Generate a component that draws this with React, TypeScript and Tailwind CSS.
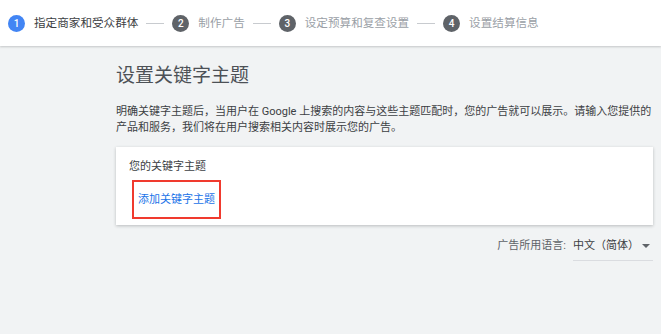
const steps = [
  { n: 1, label: '指定商家和受众群体', active: true },
  { n: 2, label: '制作广告', active: false },
  { n: 3, label: '设定预算和复查设置', active: false },
  { n: 4, label: '设置结算信息', active: false },
];

function Stepper() {
  return (
    <div className="h-[46px] bg-white shadow-[0_1px_2px_rgba(60,64,67,0.25)] flex items-center pl-[8px] relative z-10">
      {steps.map((s, i) => (
        <div key={s.n} className="flex items-center">
          {i > 0 && <div className="w-[18px] h-px bg-[#c8cbcf] mx-[8px]" />}
          <div
            className={`w-[17px] h-[17px] rounded-full flex items-center justify-center text-white text-[10px] font-medium ${
              s.active ? 'bg-[#4285f4]' : 'bg-[#5f6368]'
            }`}
          >
            {s.n}
          </div>
          <span
            className={`ml-[9px] text-[11.6px] leading-[16px] ${
              s.active ? 'text-[#3c4043]' : 'text-[#9aa0a6]'
            }`}
          >
            {s.label}
          </span>
        </div>
      ))}
    </div>
  );
}

export default function App() {
  return (
    <div className="w-full h-[334px] bg-[#f1f3f4] font-['Roboto','Noto_Sans_CJK_SC',sans-serif] overflow-hidden">
      <Stepper />

      <div className="pl-[116px] pr-[8px] pt-[18px]">
        {/* Title */}
        <h1 className="text-[19px] leading-[23px] text-[#4d5156]">设置关键字主题</h1>

        {/* Description */}
        <p className="mt-[17px] text-[11px] leading-[16px] text-[#3c4043] w-[537px]">
          明确关键字主题后，当用户在 Google 上搜索的内容与这些主题匹配时，您的广告就可以展示。请输入您提供的
          <br />
          产品和服务，我们将在用户搜索相关内容时展示您的广告。
        </p>

        {/* Keyword card */}
        <div className="mt-[11px] w-[537px] bg-white shadow-[0_1px_3px_rgba(60,64,67,0.3)] pt-[12px] pb-[6px] pl-[13px]">
          <div className="text-[11px] leading-[16px] text-[#3c4043]">您的关键字主题</div>
          <div className="mt-[5px] ml-[3px] inline-flex items-center border-2 border-[#f03a2e] h-[39px] pl-[4px] pr-[4px]">
            <span className="text-[11px] leading-[16px] text-[#1a73e8]">添加关键字主题</span>
          </div>
        </div>

        {/* Language */}
        <div className="mt-[13px] w-[537px] flex justify-end items-start">
          <span className="text-[11px] leading-[16px] text-[#5f6368]">广告所用语言:</span>
          <div className="ml-[7px] w-[80px] border-b border-[#dadce0] pb-[6px] flex items-center justify-between">
            <span className="text-[11px] leading-[16px] text-[#3c4043]">中文（简体）</span>
            <svg width="8" height="4" viewBox="0 0 8 4" className="mr-[3px]">
              <path d="M0 0h8L4 4z" fill="#5f6368" />
            </svg>
          </div>
        </div>
      </div>
    </div>
  );
}
